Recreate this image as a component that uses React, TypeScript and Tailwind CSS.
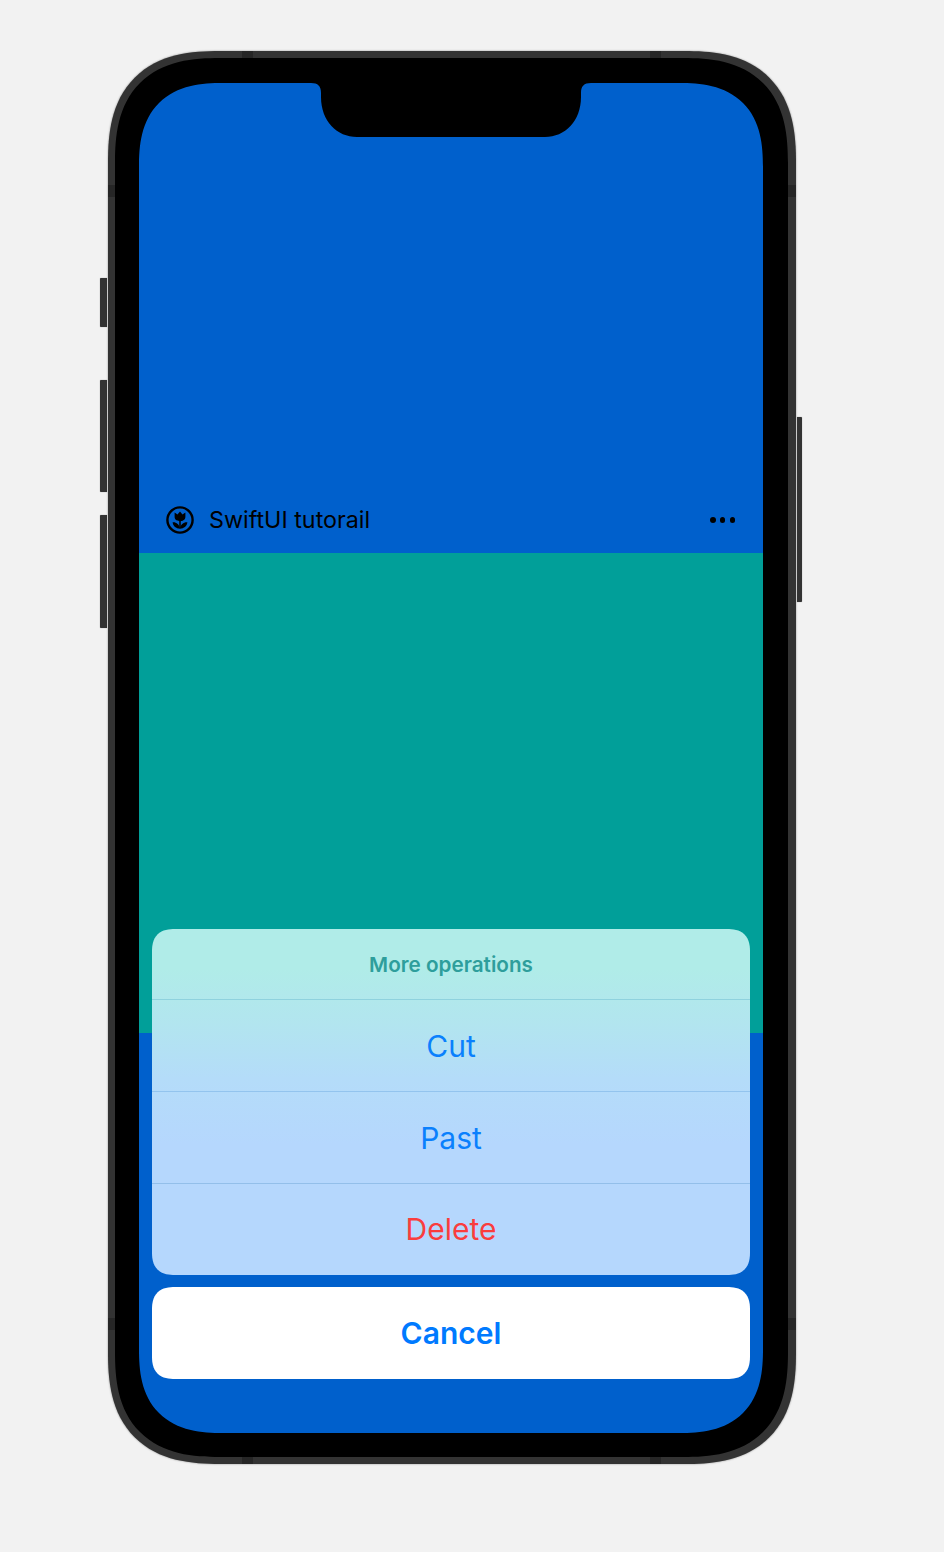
export default function App() {
  const font = { fontFamily: "Inter, 'Liberation Sans', sans-serif" };
  return (
    <div className="w-[944px] h-[1552px] bg-[#f2f2f2] pt-[51px] pl-[100px] overflow-hidden flex items-start" style={font}>
      {/* left side buttons */}
      <div className="w-[8px] pt-[227px] flex flex-col">
        <div className="w-[7px] h-[49px] bg-[#333] rounded-l-[1px] shadow-[0_0_1px_rgba(0,0,0,0.5)]" />
        <div className="mt-[53px] w-[7px] h-[112px] bg-[#333] rounded-l-[1px] shadow-[0_0_1px_rgba(0,0,0,0.5)]" />
        <div className="mt-[23px] w-[7px] h-[113px] bg-[#333] rounded-l-[1px] shadow-[0_0_1px_rgba(0,0,0,0.5)]" />
      </div>

      {/* phone body; the antenna bands are stripes of the frame's own background */}
      <div className="w-[688px] h-[1413px] shrink-0 rounded-[112px] [corner-shape:superellipse(1.35)] bg-[#333333] bg-[linear-gradient(90deg,transparent_134px,#262626_134px,#262626_145px,transparent_145px,transparent_542px,#262626_542px,#262626_553px,transparent_553px),linear-gradient(180deg,transparent_134px,#262626_134px,#262626_146px,transparent_146px,transparent_1267px,#262626_1267px,#262626_1279px,transparent_1279px)] pt-[7px] pb-[7px] pl-[7px] pr-[8px] shadow-[0_0_2px_rgba(0,0,0,0.45)]">
        <div className="w-full h-full rounded-[105px] [corner-shape:superellipse(1.35)] bg-black pt-[25px] pl-[24px] pr-[25px]">
          <div className="relative w-[624px] h-[1350px] rounded-[84px] [corner-shape:superellipse(1.35)] overflow-hidden flex flex-col">
            <section className="h-[470px] bg-[#0060cc] flex items-end">
              <div className="w-full h-[66px] pl-[27px] pr-[28px] flex items-center justify-between text-black">
                <div className="flex items-center gap-[15px]">
                  <svg width="28" height="28" viewBox="0 0 28 28" fill="none">
                    <circle cx="14" cy="14" r="12.6" stroke="black" strokeWidth="2.4" />
                    <path d="M8.6 6.6 L11.5 8.6 L14 5.6 L16.5 8.6 L19.4 6.6 L19.4 10.8 C19.4 13.8 17 15.2 14 15.2 C11 15.2 8.6 13.8 8.6 10.8 Z" fill="black" />
                    <path d="M14 15 V22.5" stroke="black" strokeWidth="1.5" />
                    <path d="M6.6 16.2 C10.4 15.9 13.3 18.4 14 22.5 C10 22.5 7.1 20.2 6.6 16.2 Z M21.4 16.2 C17.6 15.9 14.7 18.4 14 22.5 C18 22.5 20.9 20.2 21.4 16.2 Z" fill="black" />
                  </svg>
                  <span className="text-[23.3px] leading-[28px]">SwiftUI tutorail</span>
                </div>
                <div className="flex items-center gap-[4.2px]">
                  <div className="w-[5.4px] h-[5.4px] rounded-full bg-black" />
                  <div className="w-[5.4px] h-[5.4px] rounded-full bg-black" />
                  <div className="w-[5.4px] h-[5.4px] rounded-full bg-black" />
                </div>
              </div>
            </section>
            <section className="h-[480px] bg-[#019f99]" />
            <section className="h-[400px] bg-[#0060cc]" />

            {/* notch */}
            <svg className="absolute left-[172px] top-0" width="280" height="54" viewBox="0 0 280 54">
              <path d="M0 0 C7 0 10 3 10 10 V14 C10 38 26 54 46 54 H234 C254 54 270 38 270 14 V10 C270 3 273 0 280 0 Z" fill="black" />
            </svg>

            {/* action sheet */}
            <div className="absolute left-[13px] right-[13px] bottom-[54px] flex flex-col gap-[12px]">
              <div className="rounded-[23px] [corner-shape:superellipse(1.35)] overflow-hidden flex flex-col bg-[linear-gradient(180deg,#b0ece8_0px,#b0ece8_40px,#b2e5ef_95px,#b4dcf9_150px,#b5d7fd_215px,#b5d7fd_346px)]">
                <div className="h-[71px] pt-[2px] flex items-center justify-center border-b border-[#8fd2de] text-[20.7px] font-semibold text-[#2e9e9c]">
                  More operations
                </div>
                <div className="h-[92px] pt-[2px] flex items-center justify-center border-b border-[#93c4ee] text-[30px] text-[#0a80fd]">
                  Cut
                </div>
                <div className="h-[92px] pt-[2px] flex items-center justify-center border-b border-[#93bfea] text-[30px] text-[#0a80fd]">
                  Past
                </div>
                <div className="h-[91px] flex items-center justify-center text-[30px] text-[#fa3d3d]">
                  Delete
                </div>
              </div>
              <div className="h-[92px] rounded-[23px] [corner-shape:superellipse(1.35)] bg-white flex items-center justify-center text-[30px] font-semibold text-[#007aff]">
                Cancel
              </div>
            </div>
          </div>
        </div>
      </div>

      {/* right side button */}
      <div className="w-[6px] pt-[366px] flex justify-end">
        <div className="w-[5px] h-[185px] bg-[#333] rounded-r-[1px] shadow-[0_0_1px_rgba(0,0,0,0.5)]" />
      </div>
    </div>
  );
}
